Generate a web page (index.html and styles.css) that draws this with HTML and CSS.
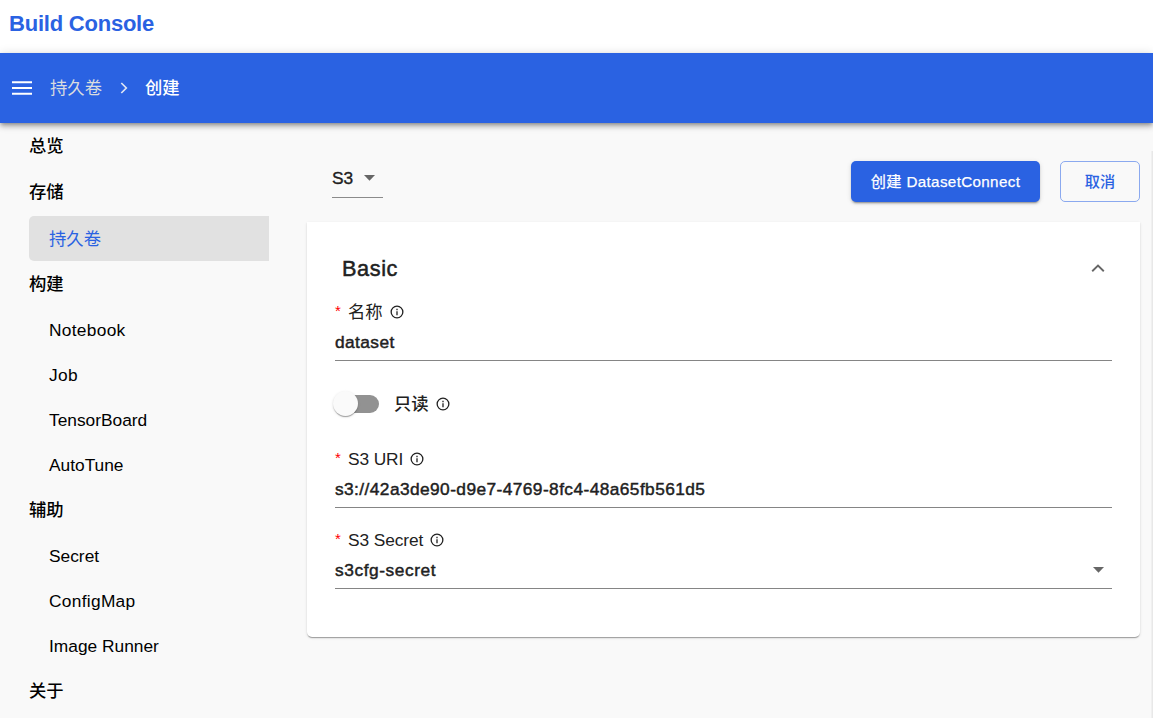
FILE: index.html
```html
<!DOCTYPE html>
<html lang="zh-CN">
<head>
<meta charset="utf-8">
<title>Build Console</title>
<link rel="stylesheet" href="styles.css">
</head>
<body>
<header class="brand">Build Console</header>
<div class="appbar">
  <svg class="menu-icon" width="24" height="24" viewBox="0 0 24 24"><path d="M2 5.2h20v2.1H2zM2 11h20v2.1H2zM2 16.7h20v2.1H2z"/></svg>
  <span class="crumb">持久卷</span>
  <svg class="crumb-sep" width="20" height="20" viewBox="0 0 20 20"><path d="M7.3 5l5 5-5 5"/></svg>
  <span class="crumb crumb-current">创建</span>
</div>
<div class="layout">
  <nav class="sidebar">
    <div class="group">总览</div>
    <div class="group group-storage">存储</div>
    <div class="item item-active">持久卷</div>
    <div class="group">构建</div>
    <div class="item item-loose">Notebook</div>
    <div class="item item-loose">Job</div>
    <div class="item">TensorBoard</div>
    <div class="item">AutoTune</div>
    <div class="group">辅助</div>
    <div class="item">Secret</div>
    <div class="item item-loose">ConfigMap</div>
    <div class="item">Image Runner</div>
    <div class="group">关于</div>
  </nav>
  <main class="content">
    <div class="toolbar">
      <div class="type-select"><span>S3</span><svg width="11" height="6" viewBox="0 0 11 6"><path d="M0 0h11L5.5 5.8z"/></svg></div>
      <div class="actions">
        <button class="btn btn-primary">创建 DatasetConnect</button>
        <button class="btn btn-outline">取消</button>
      </div>
    </div>
    <section class="card">
      <div class="card-head">
        <h2 class="card-title">Basic</h2>
        <svg class="chevron" width="14" height="9" viewBox="0 0 14 9"><path d="M1.2 7.2L7 1.5l5.8 5.7"/></svg>
      </div>
      <div class="field">
        <div class="label"><span class="req">*</span><span class="label-cjk">名称</span><svg class="info" width="14" height="14" viewBox="0 0 14 14"><circle cx="7" cy="7" r="5.85"/><path d="M7 6.3v3.9M7 3.8v1.4"/></svg></div>
        <div class="value">dataset</div>
      </div>
      <div class="switch-row">
        <div class="switch"><div class="thumb"></div></div>
        <span class="switch-label">只读</span><svg class="info" width="14" height="14" viewBox="0 0 14 14"><circle cx="7" cy="7" r="5.85"/><path d="M7 6.3v3.9M7 3.8v1.4"/></svg>
      </div>
      <div class="field">
        <div class="label"><span class="req">*</span><span class="label-text">S3 URI</span><svg class="info" width="14" height="14" viewBox="0 0 14 14"><circle cx="7" cy="7" r="5.85"/><path d="M7 6.3v3.9M7 3.8v1.4"/></svg></div>
        <div class="value">s3://42a3de90-d9e7-4769-8fc4-48a65fb561d5</div>
      </div>
      <div class="field field-secret">
        <div class="label"><span class="req">*</span><span class="label-text">S3 Secret</span><svg class="info" width="14" height="14" viewBox="0 0 14 14"><circle cx="7" cy="7" r="5.85"/><path d="M7 6.3v3.9M7 3.8v1.4"/></svg></div>
        <div class="value value-secret"><span>s3cfg-secret</span><svg width="11" height="6" viewBox="0 0 11 6"><path d="M0 0h11L5.5 5.8z"/></svg></div>
      </div>
    </section>
  </main>
  <div class="edge"></div>
</div>
</body>
</html>
```

FILE: styles.css
```css
* { box-sizing: border-box; }
body {
  margin: 0;
  height: 718px;
  overflow: hidden;
  display: flex;
  flex-direction: column;
  background: #f9f9f9;
  color: #212121;
  font-family: "Liberation Sans", "Noto Sans CJK SC", sans-serif;
  font-size: 17.33px;
}
.brand {
  height: 53px;
  flex: none;
  padding: 0 9px;
  background: #fff;
  color: #2a62e2;
  font-size: 22px;
  font-weight: 700;
  line-height: 47px;
  letter-spacing: -.22px;
}
.appbar {
  height: 70px;
  flex: none;
  display: flex;
  align-items: center;
  padding-left: 10px;
  background: #2a62e2;
  color: #fff;
  z-index: 1;
  box-shadow: 0 2px 4px -1px rgba(0,0,0,.3), 0 4px 5px rgba(0,0,0,.17), 0 1px 10px rgba(0,0,0,.14);
}
.menu-icon { fill: #fff; margin-right: 16px; }
.crumb { color: #d9dcdf; line-height: 24px; }
.crumb-current { color: #fff; font-weight: 500; }
.crumb-sep { fill: none; stroke: #dfe5f3; stroke-width: 1.7; margin: 0 11px 0 12px; }
.layout { display: flex; flex: 1; }
.sidebar { width: 269px; flex: none; padding-left: 29px; color: #000; }
.group { height: 46px; line-height: 46px; font-weight: 500; }
.group-storage { height: 47px; }
.item { height: 45px; line-height: 46px; padding-left: 20px; }
.item-loose { letter-spacing: .3px; }
.item-active { background: #e1e1e1; color: #2a62e2; border-radius: 5px 0 0 5px; }
.content { width: 833px; margin-left: 38px; }
.toolbar { height: 99px; display: flex; justify-content: space-between; padding: 38px 0 0 25px; }
.type-select {
  width: 51px;
  height: 37px;
  display: flex;
  align-items: center;
  gap: 11px;
  border-bottom: 1px solid #8b8b8b;
  padding-bottom: 2px;
  -webkit-text-stroke: .35px #212121;
}
.type-select svg, .value svg { fill: #666; }
.actions { display: flex; gap: 20px; }
.btn { height: 41px; border-radius: 5px; font: 400 15.2px "Liberation Sans", "Noto Sans CJK SC", sans-serif; padding: 0 0 4px; }
.btn-primary {
  width: 189px;
  border: 0;
  background: #2a62e2;
  color: #fff;
  letter-spacing: .35px;
  -webkit-text-stroke: .25px #fff;
  box-shadow: 0 3px 1px -2px rgba(0,0,0,.2), 0 2px 2px rgba(0,0,0,.14), 0 1px 5px rgba(0,0,0,.12);
}
.btn-outline { width: 80px; border: 1px solid #8ba9ef; background: transparent; color: #2a62e2; font-weight: 500; }
.card {
  height: 415px;
  padding: 29px 28px;
  background: #fff;
  border-radius: 0 0 5px 5px;
  box-shadow: 0 2px 1px -1px rgba(0,0,0,.2), 0 1px 1px rgba(0,0,0,.14), 0 1px 3px rgba(0,0,0,.12);
}
.card-head { height: 36px; display: flex; align-items: center; justify-content: space-between; padding: 0 7px; }
.card-title { margin: 0; font-size: 21.7px; font-weight: 400; -webkit-text-stroke: .5px #212121; letter-spacing: .6px; }
.chevron { fill: none; stroke: #666; stroke-width: 1.9; margin-bottom: 2px; }
.field { height: 61px; margin-top: 13px; border-bottom: 1px solid #858585; }
.field-secret { margin-top: 20px; }
.label { height: 23px; display: flex; align-items: center; }
.req { width: 13px; color: #f00; font-size: 15px; padding-bottom: 2px; }
.label-cjk { line-height: 23px; padding-top: 2px; }
.label-text { letter-spacing: -.1px; padding-top: 1px; }
.info { fill: none; stroke: #212121; stroke-width: 1.3; margin: 0 0 0 7px; }
.value {
  height: 37px;
  display: flex;
  align-items: center;
  justify-content: space-between;
  padding: 1px 8px 0 0;
  letter-spacing: .41px;
  -webkit-text-stroke: .45px #212121;
}
.value-secret { letter-spacing: .57px; }
.value svg { margin-bottom: 1px; }
.switch-row { height: 60px; margin-top: 13px; display: flex; align-items: center; }
.switch { width: 44px; height: 18px; border-radius: 9px; background: #929292; }
.thumb {
  width: 25px;
  height: 25px;
  margin: -4px 0 0 -2px;
  border-radius: 50%;
  background: #fafafa;
  box-shadow: 0 2px 1px -1px rgba(0,0,0,.2), 0 1px 1px rgba(0,0,0,.14), 0 1px 3px rgba(0,0,0,.12);
}
.switch-label { margin: -4px 0 0 15px; font-weight: 500; }
.edge { width: 2px; margin: 28px 0 0 auto; background: linear-gradient(90deg, #f4f4f4, #e4e4e4); }
```
